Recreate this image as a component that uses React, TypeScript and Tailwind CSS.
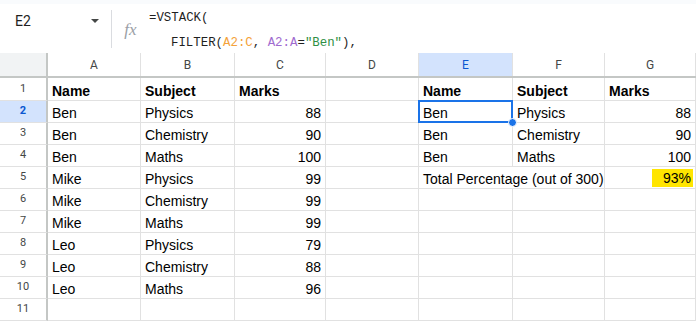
const COLS = ['A', 'B', 'C', 'D', 'E', 'F', 'G']
const WIDTHS = ['w-[93px]', 'w-[94px]', 'w-[91px]', 'w-[93px]', 'w-[94px]', 'w-[92px]', 'w-[91px]']

type Cell = { v?: string; right?: boolean; bold?: boolean; hl?: boolean; span?: boolean }

const ROWS: Cell[][] = [
  [{ v: 'Name', bold: true }, { v: 'Subject', bold: true }, { v: 'Marks', bold: true }, {}, { v: 'Name', bold: true }, { v: 'Subject', bold: true }, { v: 'Marks', bold: true }],
  [{ v: 'Ben' }, { v: 'Physics' }, { v: '88', right: true }, {}, { v: 'Ben' }, { v: 'Physics' }, { v: '88', right: true }],
  [{ v: 'Ben' }, { v: 'Chemistry' }, { v: '90', right: true }, {}, { v: 'Ben' }, { v: 'Chemistry' }, { v: '90', right: true }],
  [{ v: 'Ben' }, { v: 'Maths' }, { v: '100', right: true }, {}, { v: 'Ben' }, { v: 'Maths' }, { v: '100', right: true }],
  [{ v: 'Mike' }, { v: 'Physics' }, { v: '99', right: true }, {}, { v: 'Total Percentage (out of 300)', span: true }, { v: '' }, { v: '93%', right: true, hl: true }],
  [{ v: 'Mike' }, { v: 'Chemistry' }, { v: '99', right: true }, {}, {}, {}, {}],
  [{ v: 'Mike' }, { v: 'Maths' }, { v: '99', right: true }, {}, {}, {}, {}],
  [{ v: 'Leo' }, { v: 'Physics' }, { v: '79', right: true }, {}, {}, {}, {}],
  [{ v: 'Leo' }, { v: 'Chemistry' }, { v: '88', right: true }, {}, {}, {}, {}],
  [{ v: 'Leo' }, { v: 'Maths' }, { v: '96', right: true }, {}, {}, {}, {}],
  [{}, {}, {}, {}, {}, {}, {}],
]

function FormulaBar() {
  return (
    <div className="flex h-[49px] bg-white">
      <div className="flex w-[111px] shrink-0 items-start justify-between pl-[15px] pr-[12px] pt-[7px]">
        <span className="font-['Roboto'] text-[14px] text-[#1f1f1f]">E2</span>
        <span className="mt-[8px] h-0 w-0 border-x-[4px] border-t-[4px] border-x-transparent border-t-[#444746]" />
      </div>
      <div className="mt-[6px] h-[38px] w-px bg-[#dadce0]" />
      <div className="flex w-[37px] shrink-0 items-start justify-center pt-[13px]">
        <span className="font-['Liberation_Serif'] text-[17px] italic text-[#9aa0a6]">fx</span>
      </div>
      <div className="font-['Liberation_Mono'] text-[12.4px] leading-[25px] text-[#1f1f1f]">
        <div className="pt-[2px]">=VSTACK(</div>
        <div className="pl-[22px]">
          FILTER(<span className="text-[#f4a23a]">A2:C</span>, <span className="text-[#9f6bcf]">A2:A</span>=<span className="text-[#2e8f44]">"Ben"</span>),
        </div>
      </div>
    </div>
  )
}

function Grid() {
  return (
    <div className="font-['Liberation_Sans'] text-[14px] text-black">
      {/* column headers */}
      <div className="flex h-[25px] border-b-2 border-[#c4c7c5]">
        <div className="w-[48px] shrink-0 border-r-2 border-[#c4c7c5] bg-[#f1f3f4]" />
        {COLS.map((c, i) => (
          <div
            key={c}
            className={`${WIDTHS[i]} flex shrink-0 items-center justify-center border-r border-[#e1e1e1] font-['Roboto'] text-[12px] ${c === 'E' ? 'bg-[#d3e3fd] text-[#0b57d0]' : 'text-[#444746]'}`}
          >
            {c}
          </div>
        ))}
      </div>
      {ROWS.map((row, r) => (
        <div key={r} className={`flex ${r === 0 ? 'h-[23px]' : 'h-[22px]'}`}>
          <div
            className={`flex w-[48px] shrink-0 items-center justify-center border-r-2 border-b border-r-[#c4c7c5] border-b-[#e1e1e1] font-['Roboto'] text-[11px] ${r === 1 ? 'bg-[#d3e3fd] font-bold text-[#0b57d0]' : 'text-[#444746]'}`}
          >
            {r + 1}
          </div>
          {row.map((cell, i) => {
            const selected = r === 1 && i === 4
            return (
              <div
                key={i}
                className={`${WIDTHS[i]} relative flex shrink-0 items-end border-b border-[#e1e1e1] px-[4px] leading-[17px] ${cell.span ? 'border-r-0' : 'border-r'} ${cell.right ? 'justify-end' : ''} ${cell.bold ? 'font-bold' : ''}`}
              >
                {cell.span ? (
                  <span className="relative z-10 whitespace-nowrap">{cell.v}</span>
                ) : cell.hl ? (
                  <span className="-mr-[2px] mb-[1px] bg-[#ffe500] pl-[11px] pr-[2px] leading-[18px]">{cell.v}</span>
                ) : (
                  <span className="whitespace-nowrap">{cell.v}</span>
                )}
                {selected && (
                  <>
                    <div className="pointer-events-none absolute -left-px -top-px -right-px -bottom-px border-2 border-[#1a73e8]" />
                    <div className="absolute -bottom-[5px] -right-[5px] z-20 h-[9px] w-[9px] rounded-full border border-white bg-[#1a73e8]" />
                  </>
                )}
              </div>
            )
          })}
        </div>
      ))}
    </div>
  )
}

export default function App() {
  return (
    <div className="h-[321px] w-[696px] overflow-hidden bg-white">
      <div className="h-[4px] bg-[#f9fbfd]" />
      <FormulaBar />
      <Grid />
    </div>
  )
}
